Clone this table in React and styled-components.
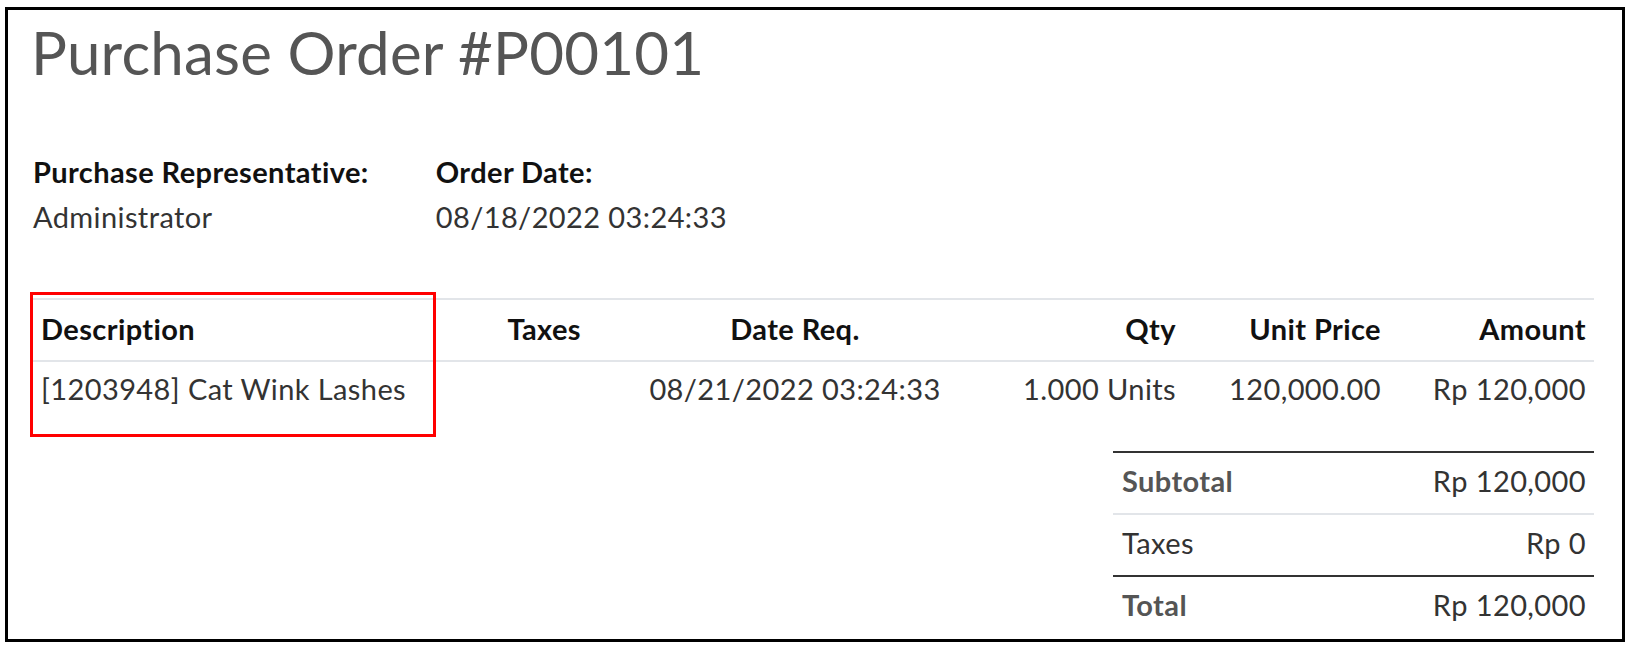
import styled, { createGlobalStyle } from "styled-components";

const GlobalStyle = createGlobalStyle`
  html, body {
    margin: 0;
    background: #fff;
  }
  body {
    font-family: Lato, "Open Sans", sans-serif;
    color: #333;
  }
`;

const lines = [
  {
    id: 1,
    description: "[1203948] Cat Wink Lashes",
    taxes: "",
    dateReq: "08/21/2022 03:24:33",
    qty: "1.000 Units",
    unitPrice: "120,000.00",
    amount: "Rp 120,000",
  },
];

const totals = [
  { label: "Subtotal", value: "Rp 120,000", strong: true, line: "dark" },
  { label: "Taxes", value: "Rp 0", strong: false, line: "light" },
  { label: "Total", value: "Rp 120,000", strong: true, line: "dark" },
];

const App = () => {
  return (
    <Page>
      <GlobalStyle />
      <Frame>
        <Title>Purchase Order #P00101</Title>

        <Info>
          <InfoBlock>
            <Label>Purchase Representative:</Label>
            <Value>Administrator</Value>
          </InfoBlock>
          <InfoBlock>
            <Label>Order Date:</Label>
            <Value>08/18/2022 03:24:33</Value>
          </InfoBlock>
        </Info>

        <Table>
          <colgroup>
            <col style={{ width: 409 }} />
            <col style={{ width: 149 }} />
            <col style={{ width: 410 }} />
            <col style={{ width: 185 }} />
            <col style={{ width: 205 }} />
            <col style={{ width: 205 }} />
          </colgroup>
          <thead>
            <tr>
              <Th>Description</Th>
              <Th align="right">Taxes</Th>
              <Th align="center">Date Req.</Th>
              <Th align="right">Qty</Th>
              <Th align="right">Unit Price</Th>
              <Th align="right">Amount</Th>
            </tr>
          </thead>
          <tbody>
            {lines.map((el) => (
              <tr key={el.id}>
                <Td>{el.description}</Td>
                <Td align="right">{el.taxes}</Td>
                <Td align="center">{el.dateReq}</Td>
                <Td align="right">{el.qty}</Td>
                <Td align="right">{el.unitPrice}</Td>
                <Td align="right">{el.amount}</Td>
              </tr>
            ))}
          </tbody>
        </Table>

        <TotalsWrap>
          <Totals>
            <tbody>
              {totals.map((t) => (
                <tr key={t.label}>
                  <TotalCell $line={t.line} $strong={t.strong}>
                    {t.label}
                  </TotalCell>
                  <TotalCell $line={t.line} align="right">
                    {t.value}
                  </TotalCell>
                </tr>
              ))}
            </tbody>
          </Totals>
        </TotalsWrap>

        <Highlight />
      </Frame>
    </Page>
  );
};

export default App;

const Page = styled.div`
  padding: 7px 11px 10px 5px;
`;

const Frame = styled.div`
  position: relative;
  box-sizing: border-box;
  width: 1620px;
  height: 635px;
  border: 3px solid #000;
  padding: 6px 28px 0 23px;
`;

const Title = styled.h1`
  margin: 0;
  font-size: 60px;
  font-weight: 400;
  line-height: 72px;
  letter-spacing: 0.2px;
  color: #555;
`;

const Info = styled.div`
  display: flex;
  gap: 67px;
  margin-top: 61px;
  padding-left: 2px;
`;

const InfoBlock = styled.div`
  display: flex;
  flex-direction: column;
`;

const Label = styled.div`
  font-size: 29px;
  font-weight: 700;
  line-height: 45px;
  letter-spacing: 0.4px;
  color: #111;
`;

const Value = styled.div`
  font-size: 29px;
  line-height: 45px;
  letter-spacing: 0.4px;
  color: #333;
`;

const Table = styled.table`
  width: 100%;
  table-layout: fixed;
  border-collapse: collapse;
  margin-top: 59px;
  font-size: 29px;
  letter-spacing: 0.4px;
`;

const Th = styled.th`
  height: 62px;
  box-sizing: border-box;
  padding: 0 8px 3px 10px;
  text-align: ${(p) => p.align || "left"};
  font-weight: 700;
  color: #111;
  border-top: 2px solid #e2e5e9;
  border-bottom: 2px solid #e2e5e9;
  white-space: nowrap;
`;

const Td = styled.td`
  height: 52px;
  padding: 0 8px 10px 10px;
  text-align: ${(p) => p.align || "left"};
  color: #333;
  white-space: nowrap;
`;

const TotalsWrap = styled.div`
  display: flex;
  justify-content: flex-end;
  margin-top: 27px;
`;

const Totals = styled.table`
  width: 481px;
  border-collapse: collapse;
  font-size: 29px;
  letter-spacing: 0.4px;
`;

const TotalCell = styled.td`
  height: 54px;
  padding: 0 8px 6px 9px;
  text-align: ${(p) => p.align || "left"};
  font-weight: ${(p) => (p.$strong ? 700 : 400)};
  color: ${(p) => (p.$strong ? "#555" : "#333")};
  border-top: 2px solid
    ${(p) => (p.$line === "dark" ? "#333" : "#e2e5e9")};
`;

const Highlight = styled.div`
  position: absolute;
  left: 22px;
  top: 282px;
  width: 406px;
  height: 145px;
  box-sizing: border-box;
  border: 3px solid #f00;
  pointer-events: none;
`;
